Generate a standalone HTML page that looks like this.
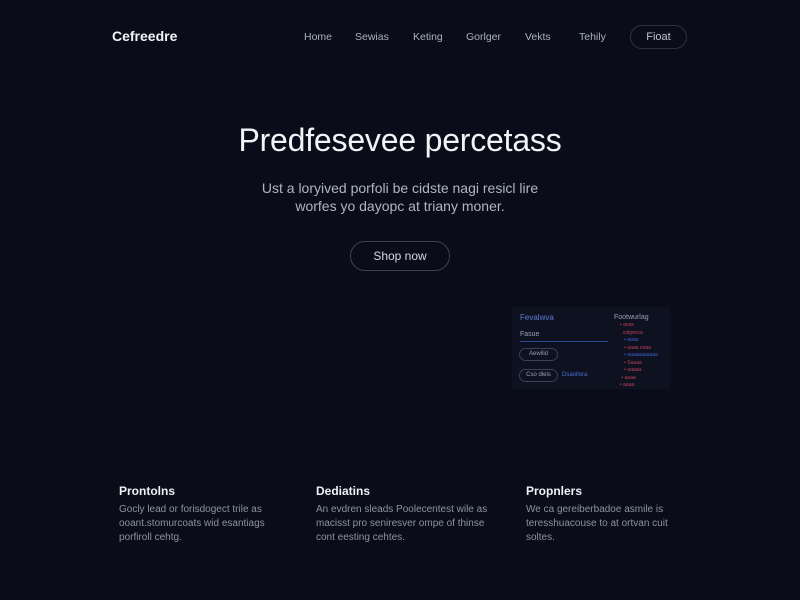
<!DOCTYPE html>
<html><head><style>
*{margin:0;padding:0;box-sizing:border-box}
body{width:800px;height:600px;background:#0a0d19;font-family:"Liberation Sans",sans-serif;color:#c9ccd6;position:relative;overflow:hidden}
.a{position:absolute;white-space:nowrap}
.nav{font-size:10.5px;color:#aab0be;top:31px}
.card h3{font-size:12px;color:#eef0f5;font-weight:bold;margin-bottom:5px}
.card p{font-size:10px;line-height:14px;color:#8c92a2;white-space:normal}
</style></head><body>
<div class="a" style="left:112px;top:28px;font-size:14px;font-weight:bold;color:#f2f3f7">Cefreedre</div>
<div class="a nav" style="left:304px">Home</div>
<div class="a nav" style="left:355px">Sewias</div>
<div class="a nav" style="left:413px">Keting</div>
<div class="a nav" style="left:466px">Gorlger</div>
<div class="a nav" style="left:525px">Vekts</div>
<div class="a nav" style="left:579px">Tehily</div>
<div class="a" style="left:630px;top:25px;width:57px;height:24px;border:1px solid #2c3246;border-radius:12px;font-size:11px;color:#c0c5d0;text-align:center;line-height:22px">Fioat</div>
<div class="a" style="left:0;width:800px;top:122px;text-align:center;font-size:32px;letter-spacing:-0.2px;color:#f2f3f7">Predfesevee percetass</div>
<div class="a" style="left:0;width:800px;top:179px;text-align:center;font-size:14px;line-height:18px;color:#b0b5c2">Ust a loryived porfoli be cidste nagi resicl lire<br>worfes yo dayopc at triany moner.</div>
<div class="a" style="left:350px;top:241px;width:100px;height:30px;border:1px solid #3a4058;border-radius:15px;font-size:12px;color:#d4d7df;text-align:center;line-height:28px">Shop now</div>
<div class="a" style="left:512px;top:307px;width:158px;height:82px;background:#0d1120"></div>
<div class="a" style="left:520px;top:313px;font-size:8px;color:#5b7bd8">Fevalwva</div>
<div class="a" style="left:520px;top:331px;font-size:7px;color:#9aa0b0">Fasue</div>
<div class="a" style="left:520px;top:341px;width:88px;height:1px;background:#2b4a8e"></div>
<div class="a" style="left:519px;top:348px;width:39px;height:13px;border:1px solid #394058;border-radius:7px;font-size:6px;text-align:center;line-height:11px;color:#9aa0b0">Aewilid</div>
<div class="a" style="left:519px;top:369px;width:39px;height:13px;border:1px solid #394058;border-radius:7px;font-size:6px;text-align:center;line-height:11px;color:#9aa0b0">Cso dleis</div>
<div class="a" style="left:562px;top:372px;font-size:6px;color:#4a6fd0">Dsaollora</div>
<div class="a" style="left:614px;top:314px;font-size:7px;color:#9aa0b0">Footwurlag</div>
<div class="a" style="left:620px;top:322px;font-size:5px;line-height:7.5px;color:#c0405a">• aose<br>&nbsp;&nbsp;colgenca<br><span style="color:#4060d0">&nbsp;&nbsp;&nbsp;• aoaa</span><br>&nbsp;&nbsp;&nbsp;• aaaa ooaa<br><span style="color:#4060d0">&nbsp;&nbsp;&nbsp;• aaaaaaaaaaa</span><br>&nbsp;&nbsp;&nbsp;• Saaaa<br>&nbsp;&nbsp;&nbsp;• aaaaa<br>&nbsp;• aaaa<br>• aaaa</div>
<div class="a card" style="left:119px;top:484px;width:175px"><h3>Prontolns</h3><p>Gocly lead or forisdogect trile as ooant.stomurcoats wid esantiags porfiroll cehtg.</p></div>
<div class="a card" style="left:316px;top:484px;width:180px"><h3>Dediatins</h3><p>An evdren sleads Poolecentest wile as macisst pro seniresver ompe of thinse cont eesting cehtes.</p></div>
<div class="a card" style="left:526px;top:484px;width:160px"><h3>Propnlers</h3><p>We ca gereiberbadoe asmile is teresshuacouse to at ortvan cuit soltes.</p></div>
</body></html>
